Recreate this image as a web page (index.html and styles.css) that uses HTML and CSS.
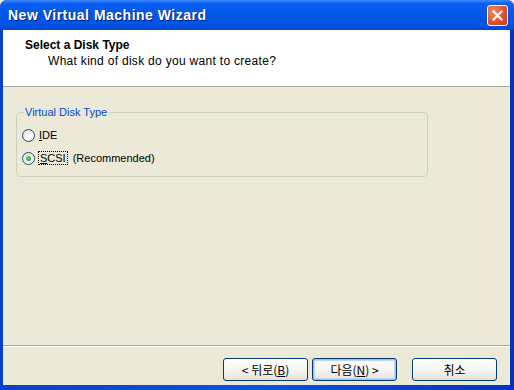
FILE: index.html
```html
<!DOCTYPE html>
<html lang="en">
<head>
  <meta charset="UTF-8">
  <title>New Virtual Machine Wizard</title>
  <link rel="stylesheet" href="styles.css">
</head>
<body>

  <div class="window">
    <div class="titlebar">
      <span class="title">New Virtual Machine Wizard</span>
      <button class="close" aria-label="Close">
        <svg width="11" height="11" viewBox="0 0 11 11">
          <path d="M1.5 1.5 L9.5 9.5 M9.5 1.5 L1.5 9.5" stroke="#fff" stroke-width="2.2" stroke-linecap="square"/>
        </svg>
      </button>
    </div>

    <div class="client">
      <div class="header">
        <h1>Select a Disk Type</h1>
        <p>What kind of disk do you want to create?</p>
      </div>

      <div class="content">
        <fieldset class="group">
          <legend>Virtual Disk Type</legend>
          <label class="radio">
            <span class="dot"></span>
            <span><u>I</u>DE</span>
          </label>
          <label class="radio">
            <span class="dot checked"></span>
            <span class="focus"><u>S</u>CSI</span>
            <span>(Recommended)</span>
          </label>
        </fieldset>
      </div>

      <div class="footer">
        <button class="btn">&lt; 뒤로(<u>B</u>)</button>
        <button class="btn default">다음(<u>N</u>) &gt;</button>
        <button class="btn cancel">취소</button>
      </div>
    </div>
  </div>

</body>
</html>
```

FILE: styles.css
```css
body {
  margin: 0;
  padding: 0;
  font-family: "Liberation Sans", "Noto Sans CJK KR", sans-serif;
  font-size: 11px;
  background: #ece9d8;
}
.window {
  width: 514px;
  height: 390px;
  display: flex;
  flex-direction: column;
  background: linear-gradient(90deg, #0842c8 0, #0b54e0 50%, #0035c0 100%);
  border-radius: 7px 7px 0 0;
  overflow: hidden;
}
.titlebar {
  height: 30px;
  display: flex;
  align-items: center;
  justify-content: space-between;
  padding: 0 6px 0 8px;
  background: linear-gradient(180deg, #3d8bff 0, #0a5ef4 12%, #0257e8 50%, #0055e5 80%, #0148d4 100%);
}
.title {
  color: #fff;
  font-weight: bold;
  font-size: 14px;
  letter-spacing: 0.5px;
  text-shadow: 1px 1px 0 #0a1d6e;
}
.close {
  width: 21px;
  height: 21px;
  padding: 0;
  border: 1px solid #fff;
  border-radius: 3px;
  background: radial-gradient(circle at 30% 30%, #f08a6a 0, #e0532f 55%, #c3391c 100%);
  display: flex;
  align-items: center;
  justify-content: center;
}
.client {
  flex: 1;
  margin: 0 4px 5px 3px;
  background: #ece9d8;
  display: flex;
  flex-direction: column;
}
.header {
  height: 57px;
  background: #fff;
  border-bottom: 1px solid #aca899;
  padding: 8px 0 0 22px;
  box-sizing: border-box;
}
.header h1 {
  margin: 0;
  font-size: 12px;
  font-weight: bold;
}
.header p {
  margin: 2px 0 0 23px;
  font-size: 12px;
  letter-spacing: 0.3px;
}
.content {
  flex: 1;
  padding: 19px 0 0 13px;
}
.group {
  width: 405px;
  height: 60px;
  margin: 0;
  padding: 9px 0 0 5px;
  border: 1px solid #d0d0bf;
  border-radius: 4px;
  box-sizing: content-box;
}
.group legend {
  color: #0046d5;
  padding: 0 1px;
  margin-left: 2px;
}
.radio {
  display: flex;
  align-items: center;
  gap: 4px;
  height: 16px;
  margin-bottom: 7px;
}
.dot {
  width: 11px;
  height: 11px;
  border: 1px solid #1c5180;
  border-radius: 50%;
  background: radial-gradient(circle at 65% 65%, #fff 0, #f2f1eb 50%, #d6d3c6 100%);
  display: flex;
  align-items: center;
  justify-content: center;
}
.dot.checked::after {
  content: "";
  width: 5px;
  height: 5px;
  border-radius: 50%;
  background: radial-gradient(circle at 40% 40%, #7cd27c 0, #21a121 70%);
}
.focus {
  outline: 1px dotted #000;
  padding: 0 1px;
  margin-right: 2px;
}
.footer {
  height: 40px;
  border-top: 1px solid #aca899;
  box-shadow: inset 0 1px 0 #fff;
  display: flex;
  align-items: flex-start;
  justify-content: flex-end;
  padding: 12px 13px 0 0;
  box-sizing: border-box;
}
.btn {
  width: 85px;
  height: 23px;
  margin-left: 4px;
  font-family: "Noto Sans CJK KR", "Liberation Sans", sans-serif;
  font-size: 12px;
  color: #000;
  border: 1px solid #003c74;
  border-radius: 3px;
  background: linear-gradient(180deg, #ffffff 0, #f4f3ee 60%, #e3e1d8 100%);
  padding: 0;
}
.btn.default {
  box-shadow: inset 0 0 0 1px #9dbcf0, inset 0 0 0 2px #c2d6f7;
}
.btn.cancel {
  margin-left: 15px;
}
```
